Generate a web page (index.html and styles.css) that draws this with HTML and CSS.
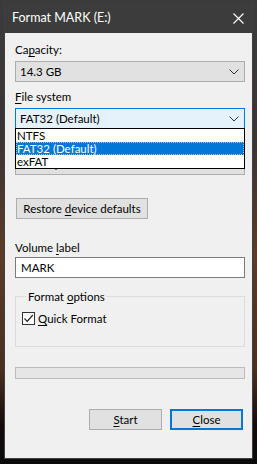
FILE: index.html
```html
<!DOCTYPE html>
<html lang="en">
<head>
    <meta charset="UTF-8">
    <meta name="viewport" content="width=device-width, initial-scale=1.0">
    <title>Format MARK (E:)</title>
    <link rel="stylesheet" href="styles.css">
</head>
<body>
<div class="window">
    <div class="titlebar">
        <span class="title">Format MARK (E:)</span>
        <svg class="close-x" width="11" height="11" viewBox="0 0 11 11">
            <path d="M0.5 0.5 L10.5 10.5 M10.5 0.5 L0.5 10.5" stroke="#fff" stroke-width="1.1" fill="none"/>
        </svg>
    </div>
    <div class="client">
        <div class="label lbl-capacity">Ca<u>p</u>acity:</div>
        <div class="combo">
            <span>14.3 GB</span>
            <svg class="chev" width="10" height="6" viewBox="0 0 10 6"><path d="M0.5 0.5 L5 5 L9.5 0.5" stroke="#333" fill="none"/></svg>
        </div>

        <div class="label lbl-fs"><u>F</u>ile system</div>
        <div class="fs-field">
            <div class="combo active">
                <span>FAT32 (Default)</span>
                <svg class="chev" width="10" height="6" viewBox="0 0 10 6"><path d="M0.5 0.5 L5 5 L9.5 0.5" stroke="#333" fill="none"/></svg>
            </div>
            <ul class="dropdown">
                <li>NTFS</li>
                <li class="selected">FAT32 (Default)</li>
                <li>exFAT</li>
            </ul>
        </div>

        <div class="label lbl-alloc"><u>A</u>llocation unit size</div>
        <div class="combo under">
            <span>8 kilobytes</span>
        </div>

        <button class="btn restore">Restore <u>d</u>evice defaults</button>

        <div class="label lbl-volume">Volume <u>l</u>abel</div>
        <div class="textbox">MARK</div>

        <fieldset class="options">
            <legend>Format <u>o</u>ptions</legend>
            <label class="check">
                <span class="box">
                    <svg width="13" height="13" viewBox="0 0 13 13"><path d="M2.5 6.5 L5.2 9.3 L10.8 3" stroke="#222" stroke-width="1.2" fill="none"/></svg>
                </span>
                <span><u>Q</u>uick Format</span>
            </label>
        </fieldset>

        <div class="progress"></div>

        <div class="actions">
            <button class="btn"><u>S</u>tart</button>
            <button class="btn default"><u>C</u>lose</button>
        </div>
    </div>
</div>
</body>
</html>
```
FILE: styles.css
```css
body {
    margin: 0;
    width: 257px;
    height: 464px;
    overflow: hidden;
    background: linear-gradient(180deg, #3b3b3b 0%, #3a3433 30%, #5c3b28 55%, #4a2e20 80%, #120a0a 92%, #0b0b0b 100%);
    font-family: Lato, "Noto Sans", sans-serif;
    font-size: 11.5px;
    color: #000;
    white-space: nowrap;
}
.window {
    margin: 3px 4px 0 4px;
    width: 249px;
    height: 456px;
    background: #3c3c3c;
    display: flex;
    flex-direction: column;
    box-sizing: border-box;
    border: 1px solid #3f3f3f;
    border-top: none;
}
.titlebar {
    height: 30px;
    display: flex;
    align-items: center;
    justify-content: space-between;
    padding: 0 8px 0 7px;
    color: #fff;
    font-size: 12.5px;
}
.title {
    margin-top: -1px;
}
.client {
    flex: 1;
    background: #f0f0f0;
    padding: 9px 7px 0 10px;
    display: flex;
    flex-direction: column;
}
.label {
    height: 16px;
    line-height: 16px;
    margin-bottom: 3px;
}
u {
    text-decoration-thickness: 1px;
    text-underline-offset: 2px;
}
.lbl-fs { margin-top: 7px; }
.lbl-alloc { margin-top: 6px; visibility: hidden; }
.lbl-volume { margin-top: 21px; margin-bottom: 1px; }
.combo {
    height: 21px;
    box-sizing: border-box;
    border: 1px solid #adadad;
    background: #e1e1e1;
    display: flex;
    align-items: center;
    justify-content: space-between;
    padding: 0 5px 0 4px;
}
.combo.active {
    border-color: #0078d7;
    background: #e5f1fb;
}
.combo.under {
    padding-bottom: 3px;
}
.fs-field {
    position: relative;
}
.dropdown {
    position: absolute;
    left: 0;
    right: 0;
    top: 20px;
    margin: 0;
    padding: 0;
    list-style: none;
    background: #fff;
    border: 1px solid #000;
    z-index: 2;
}
.dropdown li {
    height: 13px;
    line-height: 13px;
    padding-left: 1px;
}
.dropdown li.selected {
    background: #0078d7;
    color: #fff;
    outline: 1px dotted #9cc6ee;
    outline-offset: -1px;
}
.btn {
    font: inherit;
    color: #000;
    height: 21px;
    box-sizing: border-box;
    border: 1px solid #adadad;
    background: #e1e1e1;
    padding: 0;
    white-space: nowrap;
}
.restore {
    margin-top: 23px;
    margin-left: 1px;
    width: 132px;
    align-self: flex-start;
}
.textbox {
    height: 21px;
    box-sizing: border-box;
    border: 1px solid #7a7a7a;
    background: #fff;
    padding: 0 5px;
    line-height: 19px;
}
.options {
    margin: 12px 0 0 0;
    padding: 9px 0 0 6px;
    height: 57px;
    box-sizing: border-box;
    border: 1px solid #dcdcdc;
}
.options legend {
    padding: 0 2px;
    margin-left: 4px;
}
.check {
    display: flex;
    align-items: center;
    gap: 3px;
}
.box {
    width: 13px;
    height: 13px;
    box-sizing: border-box;
    border: 1px solid #333;
    background: #fff;
    display: flex;
}
.box svg {
    margin: -1px;
}
.progress {
    margin-top: 20px;
    height: 12px;
    box-sizing: border-box;
    border: 1px solid #bcbcbc;
    background: #e6e6e6;
}
.actions {
    margin-top: 30px;
    display: flex;
    justify-content: flex-end;
    gap: 8px;
    padding-right: 2px;
}
.actions .btn {
    width: 73px;
}
.btn.default {
    border: 2px solid #0078d7;
}
```
